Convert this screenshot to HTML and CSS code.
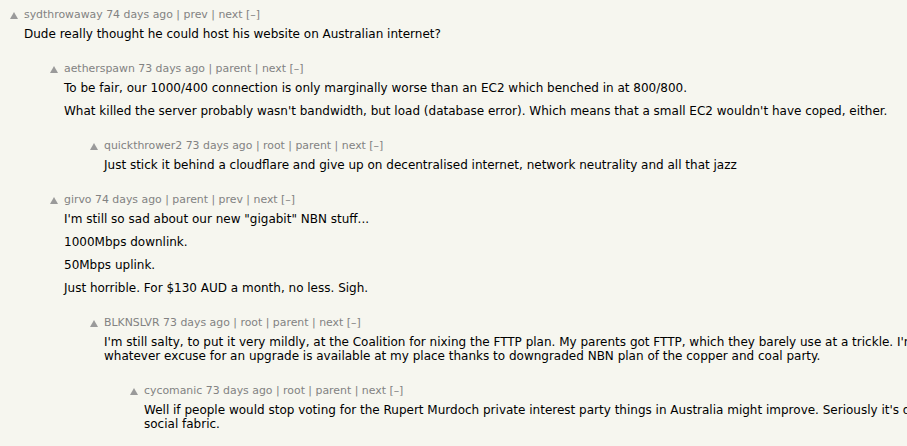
FILE: index.html
```html
<!DOCTYPE html>
<html>
<head>
<meta charset="utf-8">
<link rel="stylesheet" href="styles.css">
</head>
<body>
<div class="thread">
  <div class="comment level-0">
    <div class="vote"><svg class="arrow" width="8" height="7" viewBox="0 0 8 7"><polygon points="4,0 8,7 0,7"/></svg></div>
    <div class="body">
      <div class="head">sydthrowaway 74 days ago | prev | next [–]</div>
      <div class="text"><p>Dude really thought he could host his website on Australian internet?</p></div>
    </div>
  </div>
  <div class="comment level-1">
    <div class="vote"><svg class="arrow" width="8" height="7" viewBox="0 0 8 7"><polygon points="4,0 8,7 0,7"/></svg></div>
    <div class="body">
      <div class="head">aetherspawn 73 days ago | parent | next [–]</div>
      <div class="text"><p>To be fair, our 1000/400 connection is only marginally worse than an EC2 which benched in at 800/800.</p><p>What killed the server probably wasn't bandwidth, but load (database error). Which means that a small EC2 wouldn't have coped, either.</p></div>
    </div>
  </div>
  <div class="comment level-2">
    <div class="vote"><svg class="arrow" width="8" height="7" viewBox="0 0 8 7"><polygon points="4,0 8,7 0,7"/></svg></div>
    <div class="body">
      <div class="head">quickthrower2 73 days ago | root | parent | next [–]</div>
      <div class="text"><p>Just stick it behind a cloudflare and give up on decentralised internet, network neutrality and all that jazz</p></div>
    </div>
  </div>
  <div class="comment level-1">
    <div class="vote"><svg class="arrow" width="8" height="7" viewBox="0 0 8 7"><polygon points="4,0 8,7 0,7"/></svg></div>
    <div class="body">
      <div class="head">girvo 74 days ago | parent | prev | next [–]</div>
      <div class="text"><p>I'm still so sad about our new "gigabit" NBN stuff...</p><p>1000Mbps downlink.</p><p>50Mbps uplink.</p><p>Just horrible. For $130 AUD a month, no less. Sigh.</p></div>
    </div>
  </div>
  <div class="comment level-2">
    <div class="vote"><svg class="arrow" width="8" height="7" viewBox="0 0 8 7"><polygon points="4,0 8,7 0,7"/></svg></div>
    <div class="body">
      <div class="head">BLKNSLVR 73 days ago | root | parent | next [–]</div>
      <div class="text"><p>I'm still salty, to put it very mildly, at the Coalition for nixing the FTTP plan. My parents got FTTP, which they barely use at a trickle. I'm stuck with whatever excuse for an upgrade is available at my place thanks to downgraded NBN plan of the copper and coal party.</p></div>
    </div>
  </div>
  <div class="comment level-3">
    <div class="vote"><svg class="arrow" width="8" height="7" viewBox="0 0 8 7"><polygon points="4,0 8,7 0,7"/></svg></div>
    <div class="body">
      <div class="head">cycomanic 73 days ago | root | parent | next [–]</div>
      <div class="text"><p>Well if people would stop voting for the Rupert Murdoch private interest party things in Australia might improve. Seriously it's destroying the social fabric.</p></div>
    </div>
  </div>
</div>
</body>
</html>
```
FILE: styles.css
```css
html, body {
  margin: 0;
  padding: 0;
  background: #f6f6ef;
  overflow: hidden;
}
body {
  font-family: "DejaVu Sans", Verdana, sans-serif;
}
.thread {
  width: 1000px;
  padding: 7px 0 0 8px;
  display: flex;
  flex-direction: column;
  gap: 20px;
}
.comment {
  display: flex;
  align-items: flex-start;
}
.level-1 { padding-left: 40px; }
.level-2 { padding-left: 80px; }
.level-3 { padding-left: 120px; }
.vote {
  width: 16px;
  flex: none;
  padding: 5px 0 0 2px;
  box-sizing: border-box;
}
.arrow {
  display: block;
  fill: #9a9a9a;
}
.body {
  flex: 1;
  min-width: 0;
}
.head {
  font-size: 10.9px;
  line-height: 15px;
  color: #828282;
}
.text {
  margin-top: 5px;
  font-size: 12px;
  line-height: 14px;
  color: #000;
}
.text p {
  margin: 0;
}
.text p + p {
  margin-top: 9px;
}
```
